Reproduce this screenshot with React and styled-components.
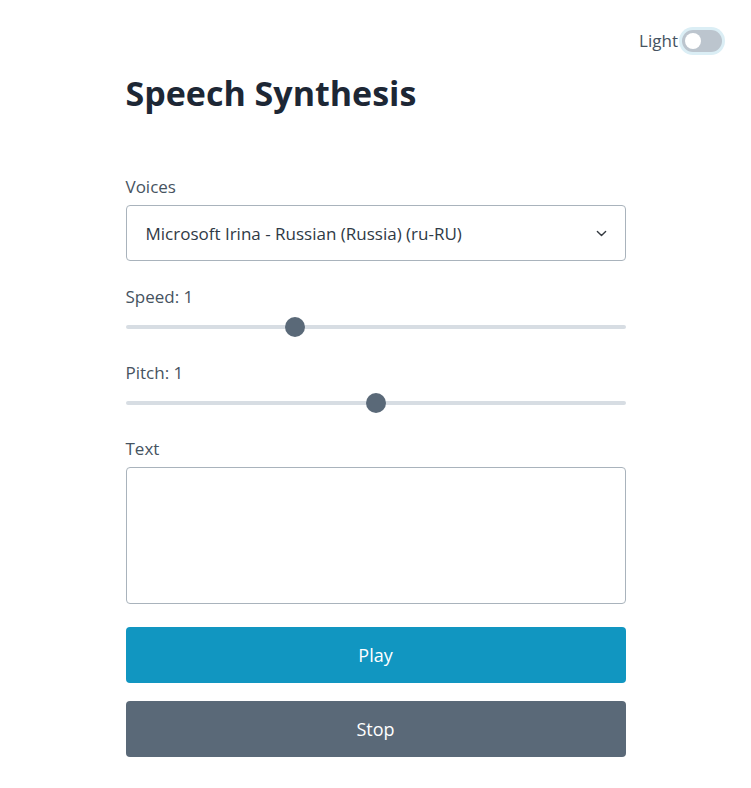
import React, { useState } from 'react';
import styled, { createGlobalStyle } from 'styled-components';

const GlobalStyle = createGlobalStyle`
    * { box-sizing: border-box; }
    body {
        margin: 0;
        background: #fff;
        font-family: "Open Sans", "Noto Sans", sans-serif;
        color: #465361;
    }
`;

const App = () => {
    const [speed, setSpeed] = useState(1);
    const [pitch, setPitch] = useState(1);
    return (
        <Page>
            <GlobalStyle />
            <TopBar>
                <ThemeLabel>Light</ThemeLabel>
                <Switch aria-label="theme">
                    <Knob />
                </Switch>
            </TopBar>
            <Main>
                <Title>Speech Synthesis</Title>
                <Field $gap={24}>
                    <Label>Voices</Label>
                    <SelectBox>
                        <span>Microsoft Irina - Russian (Russia) (ru-RU)</span>
                        <svg width="11" height="11" viewBox="0 0 16 16" fill="none" stroke="#343a40" strokeWidth="2" strokeLinecap="round" strokeLinejoin="round">
                            <path d="M2 5l6 6 6-6" />
                        </svg>
                    </SelectBox>
                </Field>
                <Field $gap={24}>
                    <Label>Speed: {speed}</Label>
                    <Range type="range" min="0.5" max="2" step="0.1" value={speed} onChange={e => setSpeed(e.target.value)} />
                </Field>
                <Field $gap={24}>
                    <Label>Pitch: {pitch}</Label>
                    <Range type="range" min="0" max="2" step="0.1" value={pitch} onChange={e => setPitch(e.target.value)} />
                </Field>
                <Field $gap={23}>
                    <Label>Text</Label>
                    <TextArea />
                </Field>
                <Button $bg="#1196c1">Play</Button>
                <Button $bg="#5a6978">Stop</Button>
            </Main>
        </Page>
    );
};

const Page = styled.div`
    width: 100%;
    min-height: 788px;
    padding-top: 30px;
`;

const TopBar = styled.div`
    display: flex;
    justify-content: flex-end;
    align-items: center;
    gap: 4px;
    padding-right: 29px;
    height: 21px;
`;

const ThemeLabel = styled.span`
    font-size: 17px;
    color: #465361;
`;

const Switch = styled.div`
    width: 40px;
    height: 22px;
    border-radius: 11px;
    background: #bcc5ce;
    box-shadow: 0 0 0 3px #dbeef5;
    display: flex;
    align-items: center;
    padding: 0 3px;
`;

const Knob = styled.div`
    width: 16px;
    height: 16px;
    border-radius: 50%;
    background: #fff;
`;

const Main = styled.main`
    width: 500px;
    margin: 0 auto;
    display: flex;
    flex-direction: column;
`;

const Title = styled.h1`
    margin: 20px 0 60px;
    font-size: 34px;
    font-weight: 700;
    line-height: 44px;
    color: #1d2735;
`;

const Field = styled.div`
    display: flex;
    flex-direction: column;
    margin-bottom: ${p => p.$gap}px;
`;

const Label = styled.label`
    font-size: 17px;
    line-height: 24px;
    color: #465361;
    margin-bottom: 6px;
`;

const SelectBox = styled.div`
    height: 56px;
    border: 1px solid #a9b3bc;
    border-radius: 4px;
    display: flex;
    align-items: center;
    justify-content: space-between;
    padding: 0 18px 0 19px;
    font-size: 17px;
    color: #2f3a46;
`;

const Range = styled.input`
    -webkit-appearance: none;
    appearance: none;
    width: 100%;
    height: 20px;
    margin: 2px 0 0;
    background: transparent;
    &::-webkit-slider-runnable-track {
        height: 4px;
        border-radius: 2px;
        background: #d7dde3;
    }
    &::-webkit-slider-thumb {
        -webkit-appearance: none;
        width: 20px;
        height: 20px;
        margin-top: -8px;
        border-radius: 50%;
        background: #5a6978;
        border: none;
    }
`;

const TextArea = styled.textarea`
    height: 137px;
    border: 1px solid #a9b3bc;
    border-radius: 4px;
    resize: none;
    font-family: inherit;
    font-size: 17px;
    padding: 10px 18px;
`;

const Button = styled.button`
    height: 56px;
    border: none;
    border-radius: 4px;
    background: ${p => p.$bg};
    color: #fff;
    font-family: inherit;
    font-size: 18px;
    margin-bottom: 18px;
    cursor: pointer;
`;

export default App;
